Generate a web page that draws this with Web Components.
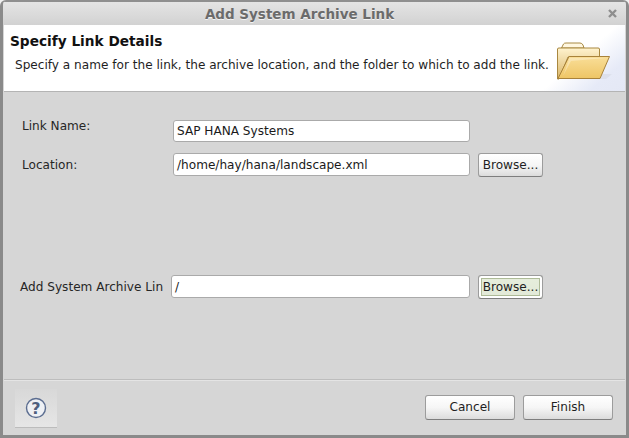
<!DOCTYPE html>
<html>
<head>
<meta charset="utf-8">
<title>Add System Archive Link</title>
<style>
  html, body { margin: 0; padding: 0; background: #f0f0f0; }
  body { font: 12.1px "DejaVu Sans", sans-serif; color: #1f1f1f; }
</style>
</head>
<body>
<dialog-window heading="Add System Archive Link">
  <wizard-banner heading="Specify Link Details">Specify a name for the link, the archive location, and the folder to which to add the link.</wizard-banner>
  <form-area>
    <form-row label="Link Name:" style="--row-top: 28px; --label-left: 18px; --label-width: 151px; --label-shift: -5px;">
      <text-field style="width: 297px; height: 22px; line-height: 20px;">SAP HANA Systems</text-field>
      <span></span>
    </form-row>
    <form-row label="Location:" style="--row-top: 11px; --label-left: 18px; --label-width: 151px; --label-shift: 1px;">
      <text-field style="width: 297px;">/home/hay/hana/landscape.xml</text-field>
      <push-button small>Browse...</push-button>
    </form-row>
    <form-row label="Add System Archive Lin" style="--row-top: 98px; --label-left: 16px; --label-width: 151px; --label-shift: 1px;">
      <text-field style="width: 299px;">/</text-field>
      <push-button small focused>Browse...</push-button>
    </form-row>
  </form-area>
  <button-bar>
    <help-button slot="left"></help-button>
    <push-button>Cancel</push-button>
    <push-button>Finish</push-button>
  </button-bar>
</dialog-window>

<script>
class DialogWindow extends HTMLElement {
  constructor() {
    super();
    this.shadowDOM = this.attachShadow({ mode: 'open' });
    this.shadowDOM.innerHTML = `
      <style>
        :host {
          display: flex;
          flex-direction: column;
          width: 629px;
          height: 438px;
          box-sizing: border-box;
          background: #d6d6d6;
          border-left: 3px solid #8a8a8a;
          border-right: 3px solid #8a8a8a;
          border-bottom: 3px solid #8a8a8a;
          border-radius: 6px 6px 0 0;
          overflow: hidden;
        }
        .title {
          height: 25px;
          flex: none;
          box-sizing: border-box;
          border-top: 2px solid #8f8f8f;
          background: linear-gradient(#e4e4e4, #d2d2d2);
          display: flex;
          align-items: center;
          justify-content: center;
          padding-right: 30px;
          position: relative;
          font: bold 13.5px "DejaVu Sans", sans-serif;
          color: #6b6b6b;
          text-shadow: 0 1px 0 #f2f2f2;
        }
        .close { position: absolute; right: 8px; top: 6px; width: 11px; height: 11px; }
        .body { flex: 1; display: flex; flex-direction: column; padding-left: 1px; padding-right: 1px; }
      </style>
      <div class="title"><span></span>
        <svg class="close" viewBox="0 0 11 11">
          <path d="M2 2L9 9M9 2L2 9" stroke="#8e8e8e" stroke-width="2.4" fill="none"/>
        </svg>
      </div>
      <div class="body"><slot></slot></div>
    `;
    this.shadowDOM.querySelector('.title span').textContent = this.getAttribute('heading');
  }
}

class WizardBanner extends HTMLElement {
  constructor() {
    super();
    this.shadowDOM = this.attachShadow({ mode: 'open' });
    this.shadowDOM.innerHTML = `
      <style>
        :host {
          display: block;
          height: 67px;
          box-sizing: border-box;
          border-bottom: 1px solid #b4b4b4;
          background: linear-gradient(139deg, #fff 0, #fff 88%, #e6eaf7 95%, #e4e8f5 100%);
          position: relative;
        }
        h2 { margin: 0; padding: 7px 0 0 6px; font: bold 13.7px/18px "DejaVu Sans", sans-serif; color: #111; }
        p { margin: 0; padding: 7px 0 0 11px; font: 12.1px/16px "DejaVu Sans", sans-serif; color: #1f1f1f; white-space: nowrap; }
        svg { position: absolute; left: 552px; top: 16px; width: 56px; height: 41px; }
      </style>
      <h2></h2>
      <p><slot></slot></p>
      <svg viewBox="0 0 56 41">
        <defs>
          <linearGradient id="back" x1="0" y1="0" x2="0" y2="1">
            <stop offset="0" stop-color="#fff3cf"/><stop offset="1" stop-color="#d9b566"/>
          </linearGradient>
          <linearGradient id="front" x1="0" y1="0" x2="0" y2="1">
            <stop offset="0" stop-color="#f9de98"/><stop offset="1" stop-color="#eec565"/>
          </linearGradient>
        </defs>
        <path d="M4 38 L50 38 L56 33 L30 33 Z" fill="#d9dbe6" opacity=".7"/>
        <path d="M5.5 7 L7.5 3 Q8 2 10 2 L24 2 Q26 2 27 4 L28 7 Z" fill="#fff7e0" stroke="#a88a45"/>
        <path d="M1.5 8 Q1.5 7 3 7 L42 7 Q43.5 7 43.5 8 L43.5 16 L12 16 L3 38 L1.5 38 Z" fill="url(#back)" stroke="#a8873f"/>
        <path d="M13 15.5 L53.5 15.5 L44 37.5 L2 37.5 Z" fill="url(#front)" stroke="#a8823a"/>
        <path d="M13.5 17 L50 17 L15 20 L7 35 Z" fill="#fff" opacity=".3"/>
      </svg>
    `;
    this.shadowDOM.querySelector('h2').textContent = this.getAttribute('heading');
  }
}

class FormArea extends HTMLElement {
  constructor() {
    super();
    this.shadowDOM = this.attachShadow({ mode: 'open' });
    this.shadowDOM.innerHTML = `
      <style>
        :host { display: flex; flex-direction: column; flex: 1; }
      </style>
      <slot></slot>
    `;
  }
}

class FormRow extends HTMLElement {
  constructor() {
    super();
    this.shadowDOM = this.attachShadow({ mode: 'open' });
    this.shadowDOM.innerHTML = `
      <style>
        :host {
          display: flex;
          align-items: flex-start;
          margin-top: var(--row-top, 0);
          padding-left: var(--label-left, 18px);
        }
        label { width: var(--label-width); position: relative; top: calc(var(--label-shift, 0px) + 4px); color: #262626; white-space: nowrap; font-size: 12.1px; }
        .wrap { display: flex; align-items: flex-start; gap: 8px; }
      </style>
      <label></label>
      <div class="wrap"><slot></slot></div>
    `;
    this.shadowDOM.querySelector('label').textContent = this.getAttribute('label');
  }
}

class TextField extends HTMLElement {
  constructor() {
    super();
    this.shadowDOM = this.attachShadow({ mode: 'open' });
    this.shadowDOM.innerHTML = `
      <style>
        :host {
          display: block;
          height: 23px;
          box-sizing: border-box;
          background: #fff;
          border: 1px solid #aaa;
          border-radius: 3px;
          padding: 0 3px;
          font: 12.1px/23px "DejaVu Sans", sans-serif;
          color: #1a1a1a;
          white-space: nowrap;
        }
      </style>
      <slot></slot>
    `;
  }
}

class PushButton extends HTMLElement {
  constructor() {
    super();
    this.shadowDOM = this.attachShadow({ mode: 'open' });
    this.shadowDOM.innerHTML = `
      <style>
        :host {
          display: block;
          box-sizing: border-box;
          width: 90px;
          height: 25px;
          border: 1px solid #9c9c9c;
          border-bottom-color: #7e7e7e;
          border-radius: 3px;
          background: linear-gradient(#fff 0, #f6f6f6 50%, #dcdcdc 100%);
          text-align: center;
          font: 12.1px/23px "DejaVu Sans", sans-serif;
          color: #1f1f1f;
          white-space: nowrap;
        }
        :host([small]) { width: 65px; height: 24px; line-height: 22px; }
        :host([focused]) {
          background: linear-gradient(#e6eedc, #e2e9d8);
          box-shadow: inset 0 0 0 2px #fff, inset 0 0 0 3px #aebb98;
        }
      </style>
      <slot></slot>
    `;
  }
}

class ButtonBar extends HTMLElement {
  constructor() {
    super();
    this.shadowDOM = this.attachShadow({ mode: 'open' });
    this.shadowDOM.innerHTML = `
      <style>
        :host {
          display: flex;
          align-items: flex-start;
          flex: none;
          height: 56px;
          box-sizing: border-box;
          border-top: 1px solid #bdbdbd;
          box-shadow: inset 0 1px 0 #e4e4e4;
          padding: 15px 12px 0 11px;
        }
        .left { flex: 1; margin-top: -6px; }
        .right { display: flex; gap: 8px; }
      </style>
      <div class="left"><slot name="left"></slot></div>
      <div class="right"><slot></slot></div>
    `;
  }
}

class HelpButton extends HTMLElement {
  constructor() {
    super();
    this.shadowDOM = this.attachShadow({ mode: 'open' });
    this.shadowDOM.innerHTML = `
      <style>
        :host {
          display: flex;
          align-items: center;
          justify-content: center;
          width: 42px;
          height: 39px;
          box-sizing: border-box;
          background: linear-gradient(#d8d8d8, #e6e6e6);
          border-bottom: 1px solid #bcbcbc;
        }
        svg { width: 22px; height: 22px; }
        text { font: bold 16px "DejaVu Sans", sans-serif; fill: #4f5f7f; }
      </style>
      <svg viewBox="0 0 22 22">
        <circle cx="11" cy="11" r="9.5" fill="#eef0f4" stroke="#5b6d90" stroke-width="1.4"/>
        <text x="11" y="17" text-anchor="middle">?</text>
      </svg>
    `;
  }
}

customElements.define('dialog-window', DialogWindow);
customElements.define('wizard-banner', WizardBanner);
customElements.define('form-area', FormArea);
customElements.define('form-row', FormRow);
customElements.define('text-field', TextField);
customElements.define('push-button', PushButton);
customElements.define('button-bar', ButtonBar);
customElements.define('help-button', HelpButton);
</script>
</body>
</html>
